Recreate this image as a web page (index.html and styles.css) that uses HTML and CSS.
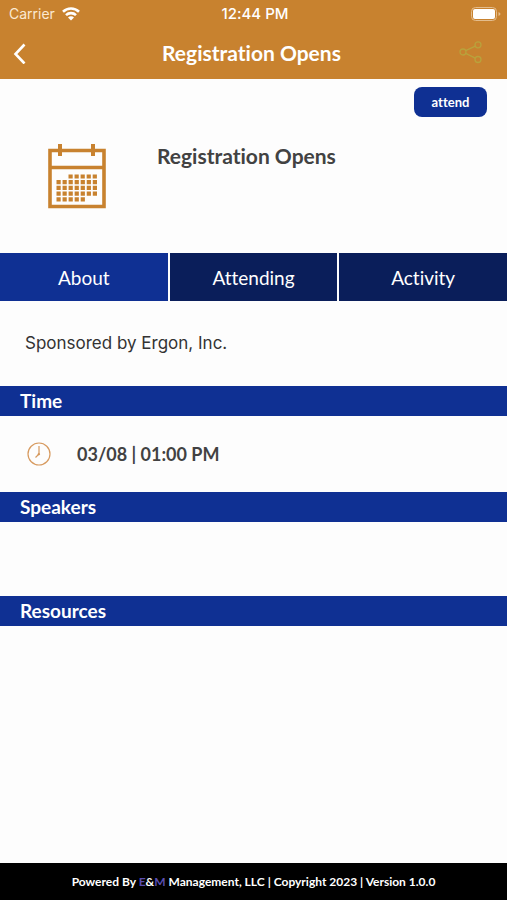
FILE: index.html
```html
<!DOCTYPE html>
<html lang="en">
<head>
<meta charset="utf-8">
<meta name="viewport" content="width=device-width, initial-scale=1">
<title>Registration Opens</title>
<link rel="stylesheet" href="styles.css">
</head>
<body>
<header class="top">
  <div class="status">
    <div class="carrier">
      <span>Carrier</span>
      <svg width="18" height="14" viewBox="0 0 18 14" fill="none" stroke="#fff" stroke-width="2.6">
        <path d="M1 4.700a11.500 11.500 0 0 1 16 0M4 8.100a7.200 7.200 0 0 1 10 0"/>
        <path d="M9 13.500 6 10.500a4.200 4.200 0 0 1 6 0z" fill="#fff" stroke="none"/>
      </svg>
    </div>
    <span class="clock">12:44 PM</span>
    <svg class="battery" width="30" height="14" viewBox="0 0 30 14">
      <rect x=".5" y=".5" width="25" height="13" rx="4" fill="none" stroke="#e3bd8e"/>
      <rect x="2" y="2" width="22" height="10" rx="2" fill="#fff"/>
      <path d="M27.5 5v4q2-1 2-2t-2-2z" fill="#e3bd8e"/>
    </svg>
  </div>
  <nav class="bar">
    <button class="icon-button" aria-label="Back">
      <svg width="14" height="22" viewBox="0 0 14 22" fill="none" stroke="#fff" stroke-width="2.6"><path d="M12.500 2.500 3.500 12l9 9.500"/></svg>
    </button>
    <h1>Registration Opens</h1>
    <button class="icon-button share" aria-label="Share">
      <svg width="24" height="24" viewBox="0 0 24 24" fill="none" stroke="#b9a23c" stroke-width="1.3">
        <circle cx="4" cy="11" r="3"/><circle cx="19" cy="3.800" r="3"/><circle cx="19" cy="18.500" r="3"/>
        <path d="m6.700 9.700 9.600-4.600M6.700 12.300l9.600 4.900"/>
      </svg>
    </button>
  </nav>
</header>
<main>
  <section class="summary">
    <button class="attend">attend</button>
    <div class="event">
      <svg width="58" height="66" viewBox="0 0 58 66" fill="none" stroke="#c8822f">
        <path d="M2 7.500h54v56H2zM2 24.500h54" stroke-width="3.600"/>
        <path d="M12 1v12M45 1v12" stroke-width="4"/>
        <path d="M20.500 33.500H49M8.500 39.200H49M8.500 44.900H49M8.500 50.600H49M8.500 56.300H37" stroke-width="4.200" stroke-dasharray="4.200 1.850"/>
      </svg>
      <h2>Registration Opens</h2>
    </div>
  </section>
  <div class="tabs" role="tablist">
    <button role="tab" aria-selected="true">About</button>
    <button role="tab" aria-selected="false">Attending</button>
    <button role="tab" aria-selected="false">Activity</button>
  </div>
  <p class="about">Sponsored by Ergon, Inc.</p>
  <h3>Time</h3>
  <div class="time">
    <svg width="24" height="24" viewBox="0 0 24 24" fill="none" stroke="#d79a5f">
      <circle cx="12" cy="12" r="11" stroke-width="1.200"/>
      <path d="M12 4v8l-3.500 3.500" stroke-width="1.200"/><circle cx="11.800" cy="12.200" r=".8" fill="#d18b45"/>
    </svg>
    <span>03/08 | 01:00 PM</span>
  </div>
  <h3>Speakers</h3>
  <div class="empty"></div>
  <h3>Resources</h3>
</main>
<footer>Powered By <span>E</span>&amp;<span>M</span> Management, LLC | Copyright 2023 | Version 1.0.0</footer>
</body>
</html>
```

FILE: styles.css
```css
* { box-sizing: border-box; }
body {
  margin: 0;
  min-height: 100vh;
  display: flex;
  flex-direction: column;
  background: #fdfdfd;
  color: #424242;
  font-family: Lato, sans-serif;
  font-variant-ligatures: none;
}
h1, h2, h3, p { margin: 0; }
svg { display: block; }
button {
  border: 0;
  padding: 0;
  color: #fff;
  font-family: inherit;
  font-variant-ligatures: inherit;
  cursor: pointer;
}
.top { background: #c8822f; color: #fff; }
.status {
  display: grid;
  grid-template-columns: 1fr auto 1fr;
  align-items: center;
  height: 27px;
  padding: 0 6px 0 9px;
  font-family: Inter, sans-serif;
  font-size: 14px;
}
.carrier { display: flex; align-items: center; gap: 7px; color: #fbe9d2; }
.clock { font-size: 15px; font-weight: 500; }
.battery { justify-self: end; }
.bar {
  display: grid;
  grid-template-columns: 1fr auto 1fr;
  align-items: center;
  height: 52px;
  padding: 0 24px 0 20px;
}
.icon-button { background: none; justify-self: start; margin-left: -8px; }
.share { justify-self: end; margin: 0; }
h1, h2 { font-size: 21px; line-height: 26px; font-weight: 700; }
.summary { padding: 8px 20px 44px; }
.attend {
  display: block;
  width: 73px;
  height: 30px;
  margin-left: auto;
  border-radius: 8px;
  background: #0f3093;
  font-size: 13px;
  font-weight: 700;
}
.event { display: flex; gap: 51px; padding: 26px 0 0 28px; }
.tabs { display: grid; grid-template-columns: repeat(3, 1fr); gap: 2px; }
.tabs button { height: 48px; background: #0a1e5a; font-size: 19px; }
.tabs button[aria-selected="true"] { background: #0f3093; }
.about {
  padding: 30px 25px;
  color: #333;
  font-family: Inter, sans-serif;
  font-size: 17px;
  line-height: 25px;
}
h3 {
  padding: 0 20px;
  background: #0f3093;
  color: #fff;
  font-size: 19px;
  line-height: 30px;
  font-weight: 700;
}
.time {
  display: flex;
  align-items: center;
  gap: 26px;
  height: 76px;
  padding: 0 27px;
  font-size: 18px;
  font-weight: 700;
}
.empty { height: 74px; }
footer {
  margin-top: auto;
  background: #000;
  color: #fff;
  text-align: center;
  font-size: 12px;
  line-height: 37px;
  font-weight: 700;
}
footer span { color: #5a4db0; }
```
